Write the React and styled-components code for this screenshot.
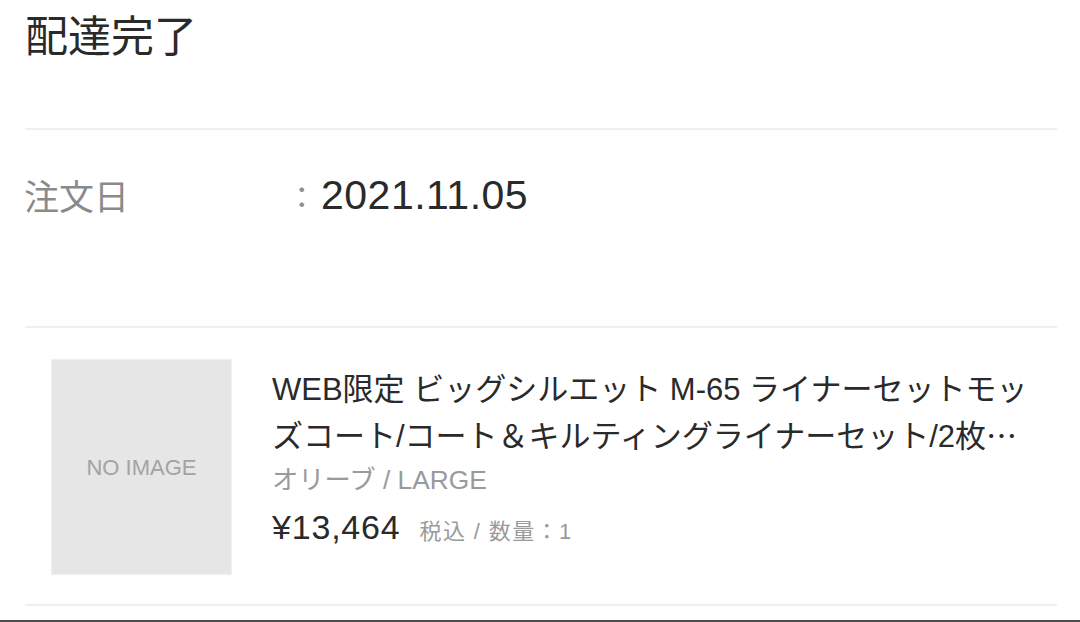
import React from "react";
import styled, { createGlobalStyle } from "styled-components";

const Global = createGlobalStyle`
  html, body { margin: 0; padding: 0; background: #fff; }
  body { font-family: "Liberation Sans", "Noto Sans CJK JP", sans-serif; color: #2b2b2b; }
  * { box-sizing: border-box; }
`;

const Page = styled.div`
  width: 1080px;
  height: 622px;
  overflow: hidden;
  padding: 0 23px 0 25px;
  border-bottom: 2px solid #4d4d4d;
`;

const Header = styled.header`
  height: 128px;
  padding-top: 8px;
`;

const Title = styled.h1`
  margin: 0;
  font-family: "Noto Sans CJK JP", sans-serif;
  font-weight: 400;
  font-size: 43px;
  line-height: 50px;
  color: #2a2a2a;
`;

const Divider = styled.hr`
  margin: 0;
  border: 0;
  height: 2px;
  background: #efefef;
`;

const Info = styled.section`
  height: 196px;
  padding-top: 43px;
`;

const InfoRow = styled.div`
  display: grid;
  grid-template-columns: 262px 1fr;
  align-items: center;
`;

const Label = styled.span`
  font-family: "Noto Sans CJK JP", sans-serif;
  font-size: 35px;
  line-height: 44px;
  color: #8a8a8a;
  margin-left: -1px;
`;

const Value = styled.span`
  display: flex;
  align-items: center;
  font-size: 41px;
  line-height: 44px;
  letter-spacing: 0.5px;
  color: #2a2a2a;
`;

const Colon = styled.span`
  font-family: "Noto Sans CJK JP", sans-serif;
  color: #8f8f8f;
  font-size: 30px;
  width: 34px;
  text-align: center;
  margin-left: -2px;
  margin-right: 2px;
`;

const Product = styled.section`
  display: flex;
  gap: 41px;
  padding: 32px 0 30px 27px;
`;

const Thumb = styled.div`
  flex: none;
  width: 179px;
  height: 214px;
  background: #e6e6e6;
  box-shadow: 0 0 1px 1px #f1f1f1;
  display: flex;
  align-items: center;
  justify-content: center;
  font-size: 22px;
  color: #a3a3a3;
  padding-top: 2px;
`;

const Details = styled.div`
  width: 762px;
  padding-top: 8px;
`;

const Name = styled.div`
  font-size: 31px;
  line-height: 44px;
  color: #2a2a2a;
`;

const Ellipsis = styled.span`
  font-family: "Noto Sans CJK JP", sans-serif;
`;

const Variant = styled.div`
  font-size: 26.3px;
  line-height: 36px;
  color: #9a9a9a;
  margin-top: 3px;
`;

const PriceRow = styled.div`
  display: flex;
  align-items: baseline;
  gap: 19px;
  margin-top: 9px;
`;

const Price = styled.span`
  font-size: 34px;
  line-height: 40px;
  letter-spacing: 0.8px;
  color: #2a2a2a;
`;

const PriceNote = styled.span`
  font-size: 22px;
  letter-spacing: 1.4px;
  color: #9a9a9a;
`;

export default function App() {
  return (
    <>
      <Global />
      <Page>
        <Header>
          <Title>配達完了</Title>
        </Header>
        <Divider />
        <Info>
          <InfoRow>
            <Label>注文日</Label>
            <Value>
              <Colon>：</Colon>
              2021.11.05
            </Value>
          </InfoRow>
        </Info>
        <Divider />
        <Product>
          <Thumb>NO IMAGE</Thumb>
          <Details>
            <Name>
              WEB限定 ビッグシルエット M-65 ライナーセットモッズコート/コート＆キルティングライナーセット/2枚<Ellipsis>…</Ellipsis>
            </Name>
            <Variant>オリーブ / LARGE</Variant>
            <PriceRow>
              <Price>¥13,464</Price>
              <PriceNote>税込 / 数量：1</PriceNote>
            </PriceRow>
          </Details>
        </Product>
        <Divider />
      </Page>
    </>
  );
}
